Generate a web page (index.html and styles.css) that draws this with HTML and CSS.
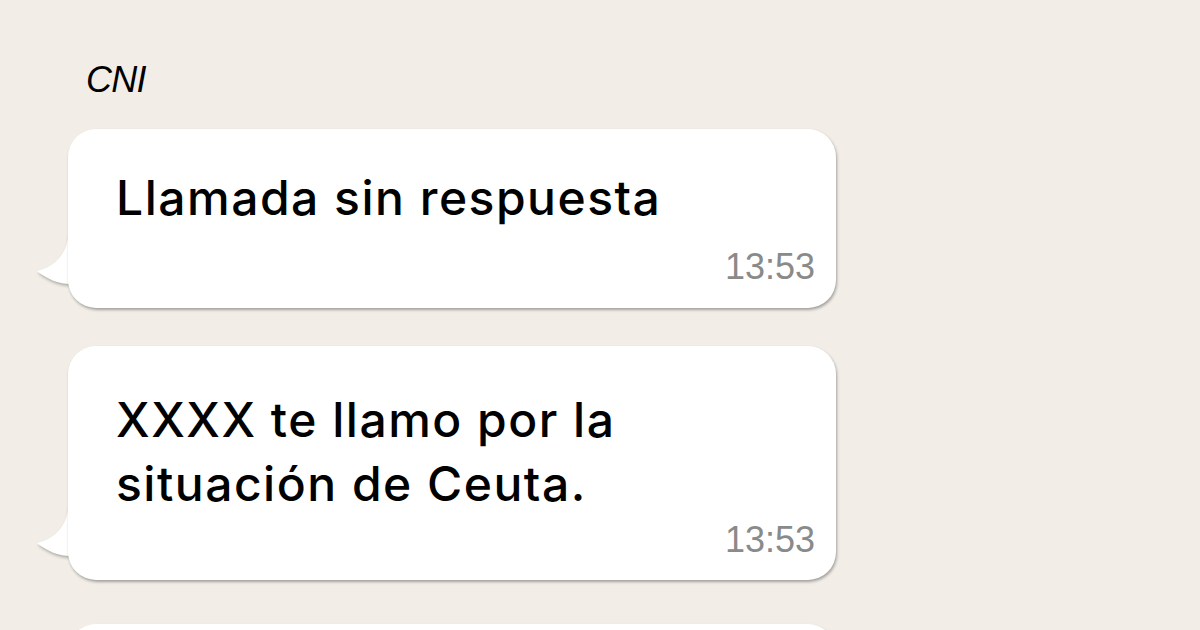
FILE: index.html
```html
<!DOCTYPE html>
<html lang="es">
<head>
    <meta charset="UTF-8">
    <meta name="viewport" content="width=device-width, initial-scale=1.0">
    <title>CNI - Chat</title>
    <link rel="stylesheet" href="styles.css">
</head>
<body>
    <div class="chat">
        <div class="sender">CNI</div>

        <div class="bubble bubble-short">
            <p class="text">Llamada sin respuesta</p>
            <div class="time">13:53</div>
            <svg class="tail" width="40" height="56" viewBox="0 0 40 56">
                <path d="M40 0 L34 0 C34 18 22 33 3 37 C14 46 26 50 36 50 L40 56 Z" fill="#fff"/>
            </svg>
        </div>

        <div class="bubble">
            <p class="text">XXXX te llamo por la<br>situación de Ceuta.</p>
            <div class="time">13:53</div>
            <svg class="tail" width="40" height="56" viewBox="0 0 40 56">
                <path d="M40 0 L34 0 C34 18 22 33 3 37 C14 46 26 50 36 50 L40 56 Z" fill="#fff"/>
            </svg>
        </div>

        <div class="bubble bubble-next">
            <p class="text">Llámame cuando puedas.</p>
            <div class="time">13:54</div>
        </div>
    </div>
</body>
</html>
```

FILE: styles.css
```css
html, body {
    margin: 0;
    height: 630px;
    overflow: hidden;
}

body {
    background: #f2eee7;
    font-family: 'Inter', 'Liberation Sans', sans-serif;
    color: #000;
}

.chat {
    display: flex;
    flex-direction: column;
    align-items: flex-start;
    gap: 38px;
    padding: 60px 0 0 68px;
}

/* contact name */
.sender {
    font-family: 'Liberation Sans', Arial, sans-serif;
    font-style: italic;
    font-size: 36px;
    line-height: 40px;
    padding-left: 18px;
    margin-bottom: -9px;
    letter-spacing: -0.8px;
}

.bubble {
    position: relative;
    box-sizing: border-box;
    width: 768px;
    background: #fff;
    border-radius: 28px;
    padding: 42px 21px 20px 48px;
    box-shadow: 1px 2px 3px rgba(0, 0, 0, 0.32);
}

.bubble-short {
    padding-top: 37px;
    padding-bottom: 21px;
}

.bubble-next {
    margin-top: 6px;
}

.text {
    margin: 0;
    font-size: 48px;
    font-weight: 500;
    line-height: 64px;
    letter-spacing: 1.5px;
}

.time {
    font-family: 'Liberation Sans', Arial, sans-serif;
    font-size: 36px;
    line-height: 40px;
    color: #8a8a8a;
    text-align: right;
    margin-top: 4px;
}

.bubble-short .time {
    margin-top: 17px;
}

/* little tail on the bottom left of each bubble */
.tail {
    position: absolute;
    left: -34px;
    bottom: 18px;
    z-index: -1;
    filter: drop-shadow(1px 2px 1.5px rgba(0, 0, 0, 0.28));
}
```
